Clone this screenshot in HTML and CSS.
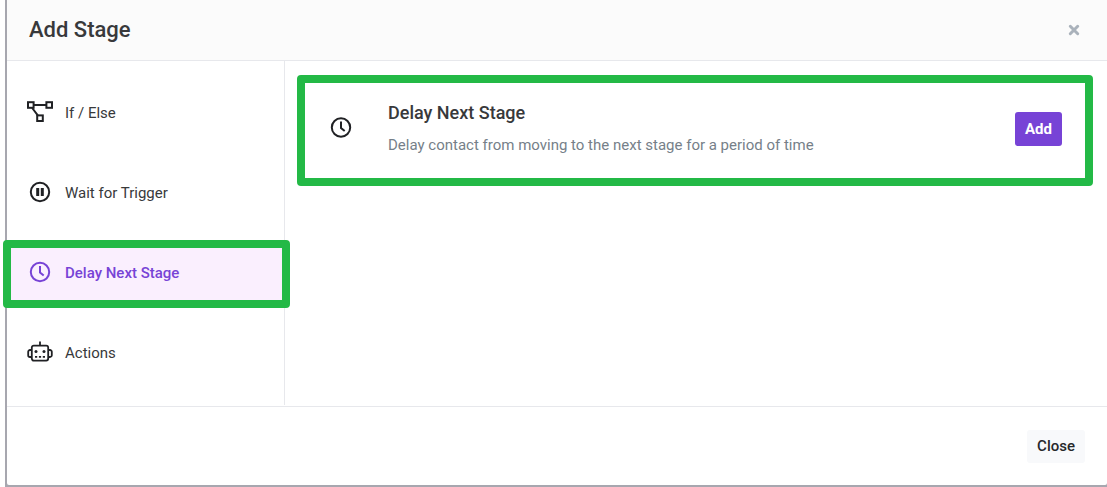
FILE: index.html
```html
<!DOCTYPE html>
<html lang="en">
<head>
<meta charset="utf-8">
<meta name="viewport" content="width=device-width, initial-scale=1">
<title>Add Stage</title>
<link rel="stylesheet" href="styles.css">
</head>
<body>
<div class="backdrop">
  <section class="modal" role="dialog" aria-labelledby="modal-title">
    <header class="modal-header">
      <h1 class="modal-title" id="modal-title">Add Stage</h1>
      <button class="dismiss" type="button" aria-label="Dismiss">
        <svg width="12" height="12" viewBox="0 0 12 12" fill="none" stroke="currentColor" stroke-width="3" stroke-linecap="round"><path d="M2.3 2.3l7.4 7.4M9.7 2.3l-7.4 7.4"/></svg>
      </button>
    </header>
    <div class="modal-body">
      <nav class="stage-nav">
        <button class="stage-tab" type="button">
          <svg class="icon" width="28" height="24" viewBox="0 0 28 24" fill="none" stroke="currentColor" stroke-width="2"><rect x="2" y="1.2" width="5.6" height="5.6"/><rect x="20.4" y="1.2" width="5.6" height="5.6"/><rect x="11.2" y="14.4" width="5.6" height="5.6"/><path d="M7.6 4h12.8M6.2 7l5.6 7.4"/></svg>
          <span>If / Else</span>
        </button>
        <button class="stage-tab" type="button">
          <svg class="icon" width="28" height="24" viewBox="0 0 28 24" fill="none" stroke="currentColor"><circle cx="14" cy="11" r="9.2" stroke-width="2"/><path d="M11.7 7v8M16.3 7v8" stroke-width="3"/></svg>
          <span>Wait for Trigger</span>
        </button>
        <button class="stage-tab is-active" type="button" aria-current="true">
          <svg class="icon" width="28" height="24" viewBox="0 0 28 24" fill="none" stroke="currentColor" stroke-width="2"><circle cx="14" cy="11" r="9.2"/><path d="M14 5v6.5l3.7 3"/></svg>
          <span>Delay Next Stage</span>
        </button>
        <button class="stage-tab" type="button">
          <svg class="icon" width="28" height="24" viewBox="0 0 28 24" fill="none" stroke="currentColor" stroke-width="1.8"><path d="M14 .5v4"/><rect x="5.8" y="4.6" width="16.4" height="15" rx="2"/><path d="M5.8 9H4a1.8 1.8 0 0 0-1.8 1.8v3.4A1.8 1.8 0 0 0 4 16h1.8M22.2 9H24a1.8 1.8 0 0 1 1.8 1.8v3.4A1.8 1.8 0 0 1 24 16h-1.8"/><g fill="currentColor" stroke="none"><circle cx="10" cy="10.5" r="1.5"/><circle cx="18" cy="10.5" r="1.5"/><path d="M9 14.9h2.2v1.8H9zM12.9 14.9h2.2v1.8h-2.2zM16.8 14.9H19v1.8h-2.2z"/></g></svg>
          <span>Actions</span>
        </button>
      </nav>
      <main class="stage-list">
        <article class="stage-card">
          <svg class="icon" width="28" height="24" viewBox="0 0 28 24" fill="none" stroke="currentColor" stroke-width="2"><circle cx="14" cy="10.5" r="9.2"/><path d="M14 4.5v6.5l3.7 3"/></svg>
          <div class="stage-text">
            <h2 class="stage-name">Delay Next Stage</h2>
            <p class="stage-description">Delay contact from moving to the next stage for a period of time</p>
          </div>
          <button class="add-button" type="button">Add</button>
        </article>
      </main>
    </div>
    <footer class="modal-footer">
      <button class="close-button" type="button">Close</button>
    </footer>
  </section>
</div>
</body>
</html>
```
FILE: styles.css
```css
* {
  box-sizing: border-box;
}

body {
  margin: 0;
  background: #fff;
  color: #38393b;
  font-family: Roboto, "Liberation Sans", sans-serif;
  font-size: 15px;
}

button {
  margin: 0;
  border: 0;
  background: none;
  color: inherit;
  font: inherit;
  cursor: pointer;
}

h1,
h2,
p {
  margin: 0;
}

.backdrop {
  margin-left: 5px;
  padding: 0 0 2px 2px;
  background: #a7a7af;
}

.modal {
  background: #fff;
  border-radius: 2px;
}

.modal-header {
  display: flex;
  align-items: center;
  justify-content: space-between;
  padding: 15px 27px 15px 22px;
  background: #fbfbfb;
  border-bottom: 1px solid #e7e8ec;
}

.modal-title {
  font-size: 22px;
  font-weight: 500;
  line-height: 30px;
}

.dismiss {
  display: flex;
  padding: 0;
  color: #aab2bb;
}

.modal-body {
  display: grid;
  grid-template-columns: 278px 1fr;
  padding-bottom: 1px;
  border-bottom: 1px solid #e7e8ec;
}

.stage-nav {
  display: flex;
  flex-direction: column;
  gap: 24px;
  padding: 24px 0;
  border-right: 1px solid #e7e8ec;
}

.stage-tab {
  position: relative;
  display: flex;
  align-items: center;
  gap: 11px;
  height: 56px;
  padding: 0 19px;
  text-align: left;
}

.icon {
  flex: none;
  color: #202124;
}

.is-active,
.is-active .icon {
  color: #7743d6;
}

.is-active {
  background: #faeffe;
  font-weight: 500;
}

.is-active::after {
  content: "";
  position: absolute;
  inset: -5px -6px -7px -4px;
  border: 8px solid #23b946;
  border-radius: 4px;
}

.stage-list {
  padding: 14px 14px 14px 12px;
}

.stage-card {
  display: flex;
  align-items: center;
  padding: 18px 23px 21px 22px;
  border: 8px solid #23b946;
  border-radius: 4px;
}

.stage-text {
  flex: 1;
  padding: 0 16px 0 33px;
}

.stage-name {
  font-size: 18px;
  font-weight: 500;
  line-height: 24px;
}

.stage-description {
  margin-top: 8px;
  color: #767f89;
  font-size: 15px;
  line-height: 24px;
}

.add-button {
  padding: 5px 10px;
  border-radius: 3px;
  background: #7743d6;
  color: #fff;
  font-weight: 700;
  line-height: 24px;
}

.modal-footer {
  display: flex;
  justify-content: flex-end;
  padding: 23px 22px 22px;
}

.close-button {
  padding: 4px 10px;
  border-radius: 3px;
  background: #f8f9fb;
  color: #26282b;
  font-weight: 500;
  line-height: 25px;
}
```
